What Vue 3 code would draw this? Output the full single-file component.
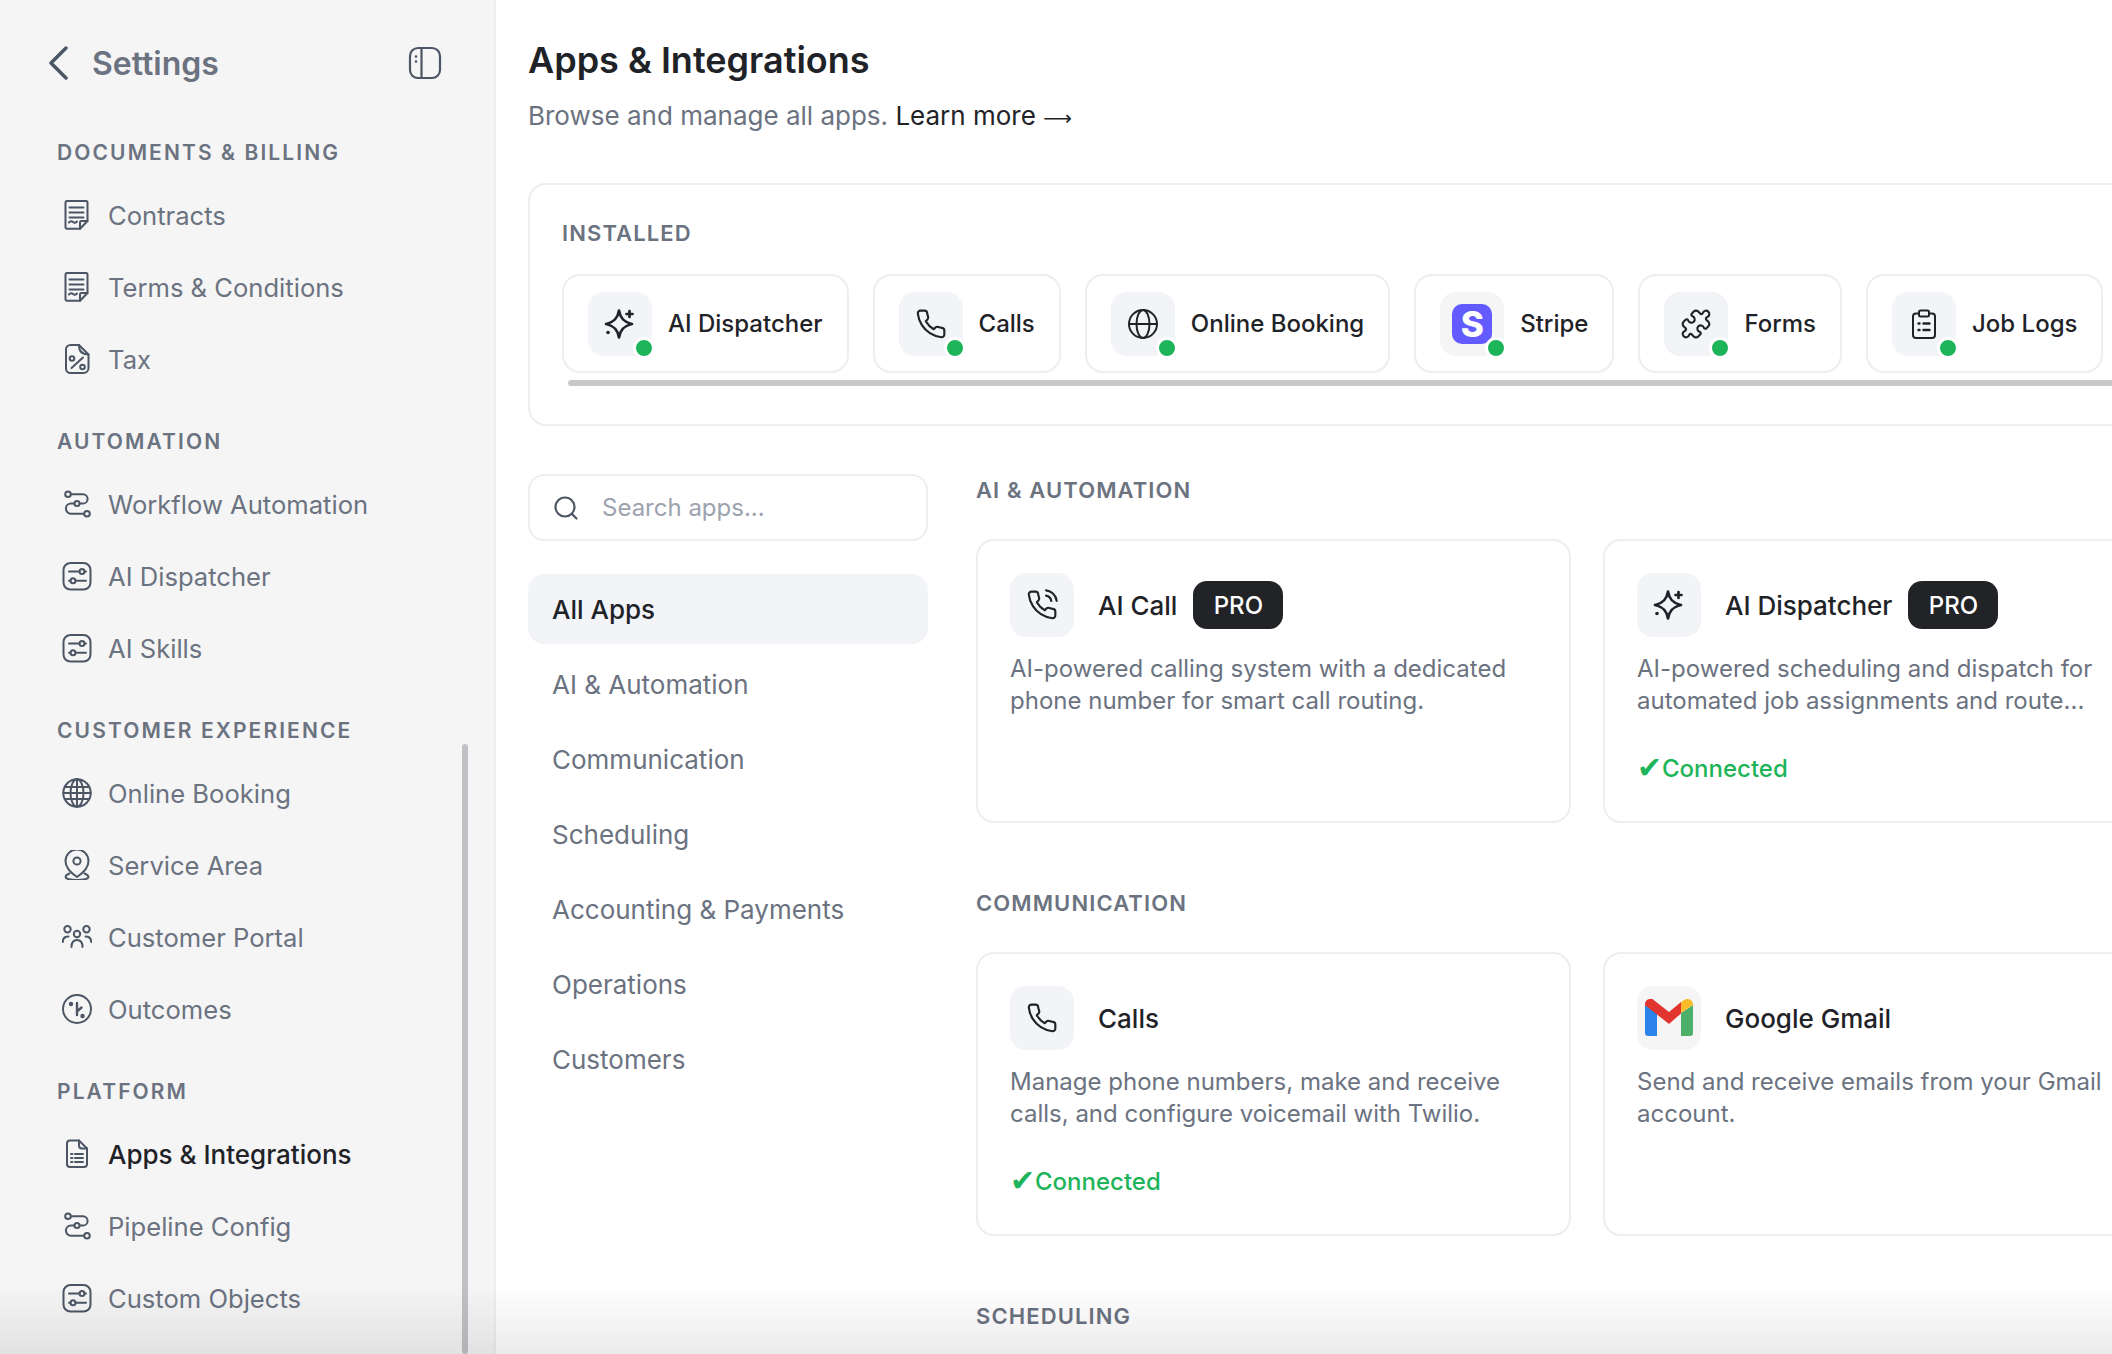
<script setup>
const sidebarGroups = [
  { title: 'Documents & Billing', items: [
    { label: 'Contracts', icon: 'contract' },
    { label: 'Terms & Conditions', icon: 'contract' },
    { label: 'Tax', icon: 'tax' },
  ] },
  { title: 'Automation', items: [
    { label: 'Workflow Automation', icon: 'flow' },
    { label: 'AI Dispatcher', icon: 'sliders' },
    { label: 'AI Skills', icon: 'sliders' },
  ] },
  { title: 'Customer Experience', items: [
    { label: 'Online Booking', icon: 'grid-globe' },
    { label: 'Service Area', icon: 'pin' },
    { label: 'Customer Portal', icon: 'people' },
    { label: 'Outcomes', icon: 'outcomes' },
  ] },
  { title: 'Platform', items: [
    { label: 'Apps & Integrations', icon: 'doc-list', active: true },
    { label: 'Pipeline Config', icon: 'flow' },
    { label: 'Custom Objects', icon: 'sliders' },
  ] },
]

const sideIcons = {
  contract: '<path d="M5 1h19a1.5 1.5 0 0 1 1.5 1.5V21l-7.5 7.8H5a1.5 1.5 0 0 1-1.5-1.5V2.5A1.5 1.5 0 0 1 5 1z"/><path d="M25.5 21h-6a1.5 1.5 0 0 0-1.5 1.5v6.3"/><path d="M7.5 7.5h14M7.5 12.5h14M7.5 17.5h14"/><path d="M7 22.5c1.3-1.6 2.8-1.6 4-.5s2.5 1 4-.5"/>',
  tax: '<path d="M8.5 1H17l9.5 9.5V24a5 5 0 0 1-5 5h-13A4.5 4.5 0 0 1 4 24.5v-19A4.5 4.5 0 0 1 8.5 1z"/><path d="M17 1c0 6 3 9.5 9.5 9.5"/><circle cx="10" cy="14.5" r="2.3"/><circle cx="20.5" cy="23" r="2.3"/><path d="M9.5 24 21 13.5"/>',
  flow: '<circle cx="6" cy="5.3" r="2.8"/><circle cx="15" cy="14.5" r="2.6"/><circle cx="25" cy="24.7" r="2.8"/><path d="M9 5.3h12a4.6 4.6 0 0 1 0 9.2h-3.4"/><path d="M12.4 14.5H9a5.1 5.1 0 0 0 0 10.2h13"/>',
  sliders: '<rect x="1.5" y="2" width="27" height="26.5" rx="7"/><circle cx="20" cy="10.5" r="2.5"/><circle cx="11" cy="19.7" r="2.5"/><path d="M7 10.5h10.5M22.5 10.5H24M13.5 19.7H24M7 19.7h1.5"/>',
  'grid-globe': '<circle cx="15" cy="15" r="13.7"/><ellipse cx="15" cy="15" rx="6.5" ry="13.7"/><path d="M15 1.3v27.4M1.3 15h27.4M3 9h24M3 21h24"/>',
  pin: '<path d="M15 27C9 23 3.5 18 3.5 11a11.5 11.5 0 0 1 23 0c0 7-5.5 12-11.5 16z"/><circle cx="15" cy="11" r="3.6"/><path d="M7.5 23.5C5 24.5 3.5 25.7 3.5 27c0 1.8 5 3 11.5 3s11.5-1.2 11.5-3c0-1.3-1.5-2.5-4-3.5"/>',
  people: '<circle cx="5.5" cy="7.3" r="3.2"/><circle cx="24.5" cy="7.3" r="3.2"/><circle cx="15" cy="12" r="3.2"/><path d="M.8 20c0-3.5 2-5.5 5.7-5.5M29.2 20c0-3.5-2-5.5-5.7-5.5M9.5 25c0-5 2-7 5.5-7s5.5 2 5.5 7"/>',
  outcomes: '<circle cx="15" cy="15" r="14"/><circle cx="9" cy="10" r="1.2" fill="currentColor"/><circle cx="20.5" cy="22" r="1.2" fill="currentColor"/><path d="M15 9v12M15.5 17l4-3.5" stroke-width="2.4"/>',
  'doc-list': '<path d="M8 1.5h9l8 8V25a3 3 0 0 1-3 3H8a3 3 0 0 1-3-3V4.5a3 3 0 0 1 3-3z"/><path d="M17 1.5v5a3 3 0 0 0 3 3h5"/><path d="M9 15h1.5M9 19h1.5M9 23h1.5M13 15h8M13 19h8M13 23h8"/>',
}

const phonePath = 'M22 16.92v3a2 2 0 0 1-2.18 2 19.79 19.79 0 0 1-8.63-3.07 19.5 19.5 0 0 1-6-6 19.79 19.79 0 0 1-3.07-8.67A2 2 0 0 1 4.11 2h3a2 2 0 0 1 2 1.72 12.84 12.84 0 0 0 .7 2.81 2 2 0 0 1-.45 2.11L8.09 9.91a16 16 0 0 0 6 6l1.27-1.27a2 2 0 0 1 2.11-.45 12.84 12.84 0 0 0 2.81.7A2 2 0 0 1 22 16.92z'

const tileIcons = {
  spark: '<g stroke-width="2.7"><path d="M15 2.5c1.2 7.8 4.8 11.7 13 13.5-8.2 1.8-11.8 5.7-13 13.5-1.2-7.800-4.800-11.700-13-13.500 8.200-1.800 11.800-5.700 13-13.500z"/><path d="M25.5 3v6M22.5 6h6"/></g><circle cx="4" cy="24.5" r="1.8" fill="#1f2328" stroke="none"/>',
  phone: `<path transform="scale(1.333)" stroke-width="1.6" d="${phonePath}"/>`,
  'phone-call': `<path transform="scale(1.333)" stroke-width="1.6" d="${phonePath}M15.05 5A5 5 0 0 1 19 8.95M15.05 1A9 9 0 0 1 23 8.94"/>`,
  globe: '<circle cx="16" cy="16" r="14"/><ellipse cx="16" cy="16" rx="6.5" ry="14"/><path d="M2 16h28"/>',
  puzzle: '<path transform="scale(1.333)" stroke-width="1.6" d="M19.439 7.85c-.049.322.059.648.289.878l1.568 1.568c.47.47.706 1.087.706 1.704s-.235 1.233-.706 1.704l-1.611 1.611a.98.98 0 0 1-.837.276c-.47-.07-.802-.48-.968-.925a2.501 2.501 0 1 0-3.214 3.214c.446.166.855.497.925.968a.979.979 0 0 1-.276.837l-1.61 1.61a2.404 2.404 0 0 1-1.705.707 2.402 2.402 0 0 1-1.704-.706l-1.568-1.568a1.026 1.026 0 0 0-.877-.29c-.493.074-.84.504-1.02.968a2.5 2.5 0 1 1-3.237-3.237c.464-.18.894-.527.967-1.02a1.026 1.026 0 0 0-.289-.877l-1.568-1.568A2.402 2.402 0 0 1 1.998 12c0-.617.236-1.234.706-1.704L4.23 8.77c.24-.24.581-.353.917-.303.515.077.877.528 1.073 1.01a2.5 2.5 0 1 0 3.259-3.259c-.482-.196-.933-.558-1.01-1.073-.05-.336.062-.676.303-.917l1.525-1.525A2.402 2.402 0 0 1 12 1.998c.617 0 1.234.236 1.704.706l1.568 1.568c.23.23.556.338.877.29.493-.074.84-.504 1.02-.968a2.5 2.5 0 1 1 3.237 3.237c-.464.18-.894.527-.967 1.02Z"/>',
  clipboard: '<path d="M11 5.5H8a3 3 0 0 0-3 3V27a3 3 0 0 0 3 3h16a3 3 0 0 0 3-3V8.5a3 3 0 0 0-3-3h-3"/><rect x="11" y="2.5" width="10" height="6" rx="1.5"/><path d="M10.5 15.5h1M10.5 22h1M15.5 15.5h6M15.5 22h6" stroke-width="2.4"/>',
}

const installed = [
  { name: 'AI Dispatcher', icon: 'spark' },
  { name: 'Calls', icon: 'phone' },
  { name: 'Online Booking', icon: 'globe' },
  { name: 'Stripe', logo: 'stripe' },
  { name: 'Forms', icon: 'puzzle' },
  { name: 'Job Logs', icon: 'clipboard' },
]

const categories = ['All Apps', 'AI & Automation', 'Communication', 'Scheduling', 'Accounting & Payments', 'Operations', 'Customers']

const appSections = [
  { title: 'AI & Automation', cards: [
    { name: 'AI Call', icon: 'phone-call', pro: true, desc: 'AI-powered calling system with a dedicated phone number for smart call routing.' },
    { name: 'AI Dispatcher', icon: 'spark', pro: true, connected: true, desc: 'AI-powered scheduling and dispatch for automated job assignments and route...' },
  ] },
  { title: 'Communication', cards: [
    { name: 'Calls', icon: 'phone', connected: true, desc: 'Manage phone numbers, make and receive calls, and configure voicemail with Twilio.' },
    { name: 'Google Gmail', logo: 'gmail', desc: 'Send and receive emails from your Gmail account.' },
  ] },
  { title: 'Scheduling', cards: [] },
]
</script>

<template>
  <div class="page">
    <aside class="sidebar">
      <header class="side-head">
        <svg class="back" width="20" height="34" viewBox="0 0 20 34"><path d="M17 2 2 17l15 15" /></svg>
        <span class="side-title">Settings</span>
        <svg class="collapse" width="34" height="34" viewBox="0 0 34 34">
          <rect x="2" y="2" width="30" height="30" rx="8" />
          <path d="M13.5 2v30" />
          <circle cx="8" cy="10.5" r="1.3" />
          <circle cx="8" cy="15.5" r="1.3" />
        </svg>
      </header>
      <section v-for="group in sidebarGroups" :key="group.title" class="side-group">
        <h3 class="side-group-title">{{ group.title }}</h3>
        <a v-for="item in group.items" :key="item.label" class="side-item" :class="{ active: item.active }">
          <svg class="side-icon" width="30" height="30" viewBox="0 0 30 30" v-html="sideIcons[item.icon]"></svg>
          {{ item.label }}
        </a>
      </section>
      <div class="side-scroll"></div>
    </aside>

    <main class="main">
      <h1 class="page-title">Apps &amp; Integrations</h1>
      <p class="page-sub">Browse and manage all apps. <a class="learn">Learn more <span class="arrow">⟶</span></a></p>

      <section class="installed">
        <h2 class="installed-title">Installed</h2>
        <div class="chips">
          <div v-for="app in installed" :key="app.name" class="chip">
            <span class="tile" :class="{ plain: app.logo }">
              <svg v-if="app.icon" class="tile-icon" width="32" height="32" viewBox="0 0 32 32" v-html="tileIcons[app.icon]"></svg>
              <span v-else class="stripe-logo">S</span>
              <i class="dot"></i>
            </span>
            {{ app.name }}
          </div>
        </div>
        <div class="chips-scroll"></div>
      </section>

      <div class="browser">
        <nav class="cats">
          <label class="search">
            <svg width="26" height="26" viewBox="0 0 26 26"><circle cx="12" cy="12" r="9.5" /><path d="m19 19 4.5 4.5" /></svg>
            <span class="search-text">Search apps...</span>
          </label>
          <ul class="cat-list">
            <li v-for="(cat, i) in categories" :key="cat" class="cat" :class="{ active: i === 0 }">{{ cat }}</li>
          </ul>
        </nav>

        <div class="sections">
          <section v-for="section in appSections" :key="section.title" class="app-section">
            <h2 class="section-title">{{ section.title }}</h2>
            <div v-if="section.cards.length" class="cards">
              <article v-for="card in section.cards" :key="card.name" class="card">
                <div class="card-head">
                  <span class="tile" :class="{ plain: card.logo }">
                    <svg v-if="card.icon" class="tile-icon" width="32" height="32" viewBox="0 0 32 32" v-html="tileIcons[card.icon]"></svg>
                    <svg v-else width="48" height="38" viewBox="0 0 48 38">
                      <path d="M0 6v28a3 3 0 0 0 3 3h9V14z" fill="#2a84ea" />
                      <path d="M48 6v28a3 3 0 0 1-3 3h-9V14z" fill="#4caf6a" />
                      <path d="M36 14V3l4-2.5c3.5-1.5 8 .5 8 5.5z" fill="#fbbc2c" />
                      <path d="M0 6c0-5 4.5-7 8-5.5L24 13 36 3v11.5L24 25 0 6z" fill="#e2352f" />
                      <path d="M0 6l12 9V6L8 .5C4.5-1 0 1 0 6z" fill="#e2352f" />
                    </svg>
                  </span>
                  <span class="card-name">{{ card.name }}</span>
                  <span v-if="card.pro" class="pro">PRO</span>
                </div>
                <p class="card-desc">{{ card.desc }}</p>
                <div v-if="card.connected" class="connected"><span class="check">✔</span>Connected</div>
              </article>
            </div>
          </section>
        </div>
      </div>
    </main>
    <div class="bottom-fade"></div>
  </div>
</template>

<style>
html, body {
  margin: 0;
  background: #fff;
  overflow: hidden;
}
</style>

<style scoped>
.page {
  position: relative;
  display: flex;
  width: 2112px;
  height: 1354px;
  overflow: hidden;
  font-family: Inter, "Noto Sans", "DejaVu Sans", sans-serif;
  color: #6b7280;
}

.sidebar {
  position: relative;
  box-sizing: border-box;
  flex: 0 0 496px;
  height: 100%;
  padding: 46px 0 0 57px;
  background: #f5f5f6;
  border-right: 2px solid #eeeeef;
}

.side-head {
  display: flex;
  align-items: center;
  height: 34px;
  margin-bottom: 59px;
}

.back {
  margin-left: -8px;
  fill: none;
  stroke: #4b5563;
  stroke-width: 3.5;
  stroke-linecap: round;
  stroke-linejoin: round;
}

.side-title {
  margin-left: 23px;
  font-size: 32px;
  font-weight: 600;
  color: #6b7280;
}

.collapse {
  margin-left: auto;
  margin-right: 52px;
  fill: none;
  stroke: #4b5563;
  stroke-width: 2.2;
}

.collapse circle {
  fill: #4b5563;
  stroke: none;
}

.side-group {
  margin-bottom: 33px;
}

.side-group-title {
  margin: 0 0 12px;
  height: 28px;
  line-height: 28px;
  font-size: 21px;
  font-weight: 600;
  letter-spacing: 2.1px;
  text-transform: uppercase;
  color: #6b7280;
}

.side-item {
  display: flex;
  align-items: center;
  gap: 16px;
  height: 72px;
  margin-left: 5px;
  font-size: 25.6px;
  color: #6b7280;
}

.side-item.active {
  color: #1f2328;
  font-size: 26px;
  font-weight: 500;
}

.side-icon {
  flex: none;
  fill: none;
  stroke: #4b5563;
  stroke-width: 2;
  stroke-linecap: round;
  stroke-linejoin: round;
}

.side-scroll {
  position: absolute;
  top: 744px;
  bottom: 0;
  left: 462px;
  width: 6px;
  border-radius: 3px;
  background: #c0c1c5;
}

.main {
  flex: 1;
  min-width: 0;
  padding: 37px 0 0 32px;
}

.page-title {
  margin: 0;
  height: 46px;
  line-height: 46px;
  font-size: 36px;
  font-weight: 600;
  color: #1f2328;
}

.page-sub {
  margin: 14px 0 0;
  height: 37px;
  line-height: 38px;
  font-size: 26px;
  color: #6b7280;
}

.learn {
  color: #1f2328;
}

.arrow {
  font-family: "DejaVu Sans", sans-serif;
  font-size: 20px;
}

.installed {
  box-sizing: border-box;
  width: 1700px;
  height: 243px;
  margin-top: 49px;
  padding: 31px 0 0 32px;
  border: 2px solid #eeeeef;
  border-radius: 18px;
}

.installed-title {
  margin: 0 0 24px;
  height: 34px;
  line-height: 34px;
  font-size: 22px;
  font-weight: 600;
  letter-spacing: 1.1px;
  text-transform: uppercase;
  color: #6b7280;
}

.chips {
  display: flex;
  gap: 24px;
}

.chip {
  display: flex;
  flex: none;
  align-items: center;
  gap: 16px;
  box-sizing: border-box;
  height: 99px;
  padding: 0 24px;
  border: 2px solid #eeeeef;
  border-radius: 18px;
  font-size: 24px;
  font-weight: 500;
  color: #1f2328;
}

.tile {
  position: relative;
  display: flex;
  flex: none;
  align-items: center;
  justify-content: center;
  width: 64px;
  height: 64px;
  border-radius: 16px;
  background: #f3f4f8;
}

.tile.plain {
  background: #f5f5f5;
}

.tile-icon {
  fill: none;
  stroke: #1f2328;
  stroke-width: 2;
  stroke-linecap: round;
  stroke-linejoin: round;
}

.dot {
  position: absolute;
  right: -3px;
  bottom: -3px;
  box-sizing: border-box;
  width: 22px;
  height: 22px;
  border: 3px solid #fff;
  border-radius: 50%;
  background: #1eb45a;
}

.stripe-logo {
  display: flex;
  align-items: center;
  justify-content: center;
  width: 40px;
  height: 40px;
  border-radius: 10px;
  background: #635bff;
  color: #fff;
  font-size: 35px;
  font-weight: 800;
}

.chips-scroll {
  height: 6px;
  margin: 7px 0 0 6px;
  border-radius: 3px;
  background: #c8c8ca;
}

.browser {
  display: flex;
  gap: 48px;
  margin-top: 48px;
}

.cats {
  flex: 0 0 400px;
}

.search {
  display: flex;
  align-items: center;
  gap: 23px;
  box-sizing: border-box;
  height: 67px;
  padding: 0 0 0 23px;
  border: 2px solid #eeeeef;
  border-radius: 16px;
  font-size: 24px;
  color: #9ca3af;
}

.search svg {
  flex: none;
  fill: none;
  stroke: #4b5563;
  stroke-width: 2.2;
  stroke-linecap: round;
}

.cat-list {
  margin: 33px 0 0;
  padding: 0;
  list-style: none;
  display: flex;
  flex-direction: column;
  gap: 5px;
}

.cat {
  display: flex;
  align-items: center;
  height: 70px;
  padding-left: 24px;
  border-radius: 16px;
  font-size: 26px;
  color: #6b7280;
}

.cat.active {
  background: #f3f4f8;
  color: #1f2328;
  font-weight: 500;
}

.sections {
  flex: none;
  padding-top: 1px;
}

.section-title {
  margin: 0 0 34px;
  height: 30px;
  line-height: 30px;
  font-size: 22px;
  font-weight: 600;
  letter-spacing: 1.1px;
  text-transform: uppercase;
  color: #6b7280;
}

.app-section {
  margin-bottom: 65px;
}

.cards {
  display: flex;
  gap: 32px;
}

.card {
  box-sizing: border-box;
  width: 595px;
  height: 284px;
  padding: 32px;
  border: 2px solid #eeeeef;
  border-radius: 18px;
}

.card-head {
  display: flex;
  align-items: center;
  height: 64px;
}

.card-name {
  margin-left: 24px;
  font-size: 26px;
  font-weight: 500;
  color: #1f2328;
}

.pro {
  display: flex;
  align-items: center;
  justify-content: center;
  width: 90px;
  height: 48px;
  margin-left: 16px;
  border-radius: 14px;
  background: #212327;
  color: #fff;
  font-size: 24px;
  font-weight: 500;
}

.card-desc {
  height: 64px;
  margin: 16px 0 0;
  line-height: 32px;
  font-size: 24px;
  color: #6b7280;
}

.connected {
  display: flex;
  align-items: center;
  margin-top: 35px;
  height: 32px;
  font-size: 24px;
  font-weight: 500;
  color: #1eb45a;
}

.check {
  flex: none;
  width: 25px;
  font-family: "DejaVu Sans", sans-serif;
  font-size: 30px;
  font-weight: 400;
  line-height: 32px;
  overflow: visible;
  white-space: nowrap;
}

.bottom-fade {
  position: absolute;
  left: 0;
  right: 0;
  bottom: 0;
  height: 70px;
  background: linear-gradient(to bottom, rgba(0, 0, 0, 0), rgba(0, 0, 0, 0.08));
  pointer-events: none;
}
</style>
